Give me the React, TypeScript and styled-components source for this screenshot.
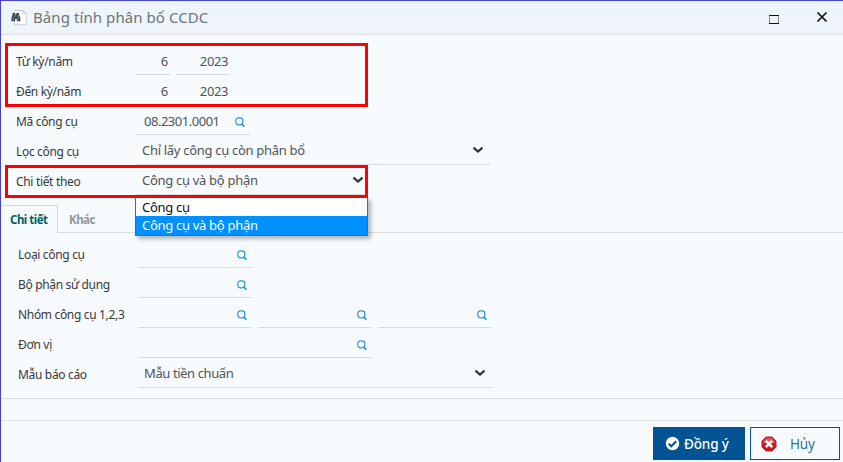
import React from "react";
import styled, { createGlobalStyle } from "styled-components";

const Global = createGlobalStyle`
  * { box-sizing: border-box; }
  body { margin: 0; background: #f7fbfe; font-family: "Noto Sans", "Open Sans", sans-serif; }
`;

const Dialog = styled.div`
  position: relative;
  width: 843px;
  height: 462px;
  overflow: hidden;
  display: flex;
  flex-direction: column;
  background: #f7fbfe;
  border-left: 1px solid #4343cf;
  border-top: 1px solid #4343cf;
  white-space: nowrap;
`;

const TitleBar = styled.header`
  display: flex;
  align-items: center;
  height: 34px;
  padding: 0 15px 0 10px;
  background: #edf5fb;
  border-bottom: 1px solid #e0e0e0;
`;

const Title = styled.h1`
  flex: 1;
  margin: -1px 0 0 6px;
  font-size: 15px;
  line-height: 20px;
  font-weight: 400;
  letter-spacing: 0.08px;
  color: #6f7376;
`;

const WindowButton = styled.button<{ $gap?: number }>`
  display: flex;
  padding: 0;
  margin: ${(p) => (p.$gap ? -2 : 0)}px 0 0 ${(p) => p.$gap ?? 0}px;
  border: 0;
  background: none;
`;

const Form = styled.section<{ $left: number; $top: number }>`
  display: flex;
  flex-direction: column;
  padding: ${(p) => p.$top}px 0 0 ${(p) => p.$left}px;
`;

const Row = styled.div<{ $labelWidth: number }>`
  display: grid;
  grid-template-columns: ${(p) => p.$labelWidth}px auto;
  height: 30px;
`;

const Label = styled.label`
  font-size: 12px;
  line-height: 33px;
  letter-spacing: -0.33px;
  color: #36383a;
`;

const Fields = styled.div`
  display: flex;
  gap: 6px;
`;

const Field = styled.div<{ $width: number; $pad?: number; $padEnd?: number; $end?: boolean }>`
  display: flex;
  align-items: center;
  justify-content: ${(p) => (p.$end ? "flex-end" : "space-between")};
  width: ${(p) => p.$width}px;
  height: 30px;
  padding: 0 ${(p) => (p.$end ? 2 : p.$padEnd ?? 5)}px 0 ${(p) => p.$pad ?? 6}px;
  border-bottom: 1px solid #d9dcdf;
`;

const Value = styled.span<{ $tracking?: number; $drop?: number }>`
  flex: none;
  font-size: 13px;
  line-height: 28px;
  padding-top: ${(p) => p.$drop ?? 0}px;
  letter-spacing: ${(p) => p.$tracking ?? -0.3}px;
  color: #505356;
`;

const IconSlot = styled.span<{ $drop?: number }>`
  display: flex;
  margin-left: auto;
  margin-top: ${(p) => p.$drop ?? 0}px;
`;

const Tabs = styled.nav`
  display: flex;
  height: 38px;
  padding-top: 10px;
  border-bottom: 1px solid #d9dcdf;
`;

const Tab = styled.button<{ $active?: boolean }>`
  height: ${(p) => (p.$active ? 28 : 27)}px;
  width: ${(p) => (p.$active ? 57 : 49)}px;
  padding: ${(p) => (p.$active ? 0 : 2)}px 0 0 ${(p) => (p.$active ? 9 : 11)}px;
  text-align: left;
  border: solid #d9dcdf;
  border-width: ${(p) => (p.$active ? "1px 1px 0 0" : "0")};
  background: #f7fbfe;
  font: 700 11.5px/25px "Noto Sans", sans-serif;
  letter-spacing: -0.5px;
  color: ${(p) => (p.$active ? "#00645f" : "#929699")};
`;

const Divider = styled.div`
  height: 1px;
  margin-top: 10px;
  background: #d9dcdf;
`;

const Footer = styled.footer`
  display: flex;
  justify-content: flex-end;
  gap: 5px;
  margin-top: 21px;
  padding: 6px 3px 0 0;
  height: 42px;
  border-top: 1px solid #dfe2e5;
`;

const Action = styled.button<{ $primary?: boolean }>`
  display: flex;
  align-items: center;
  width: ${(p) => (p.$primary ? 92 : 90)}px;
  height: 33px;
  padding: 0 0 0 ${(p) => (p.$primary ? 11 : 10)}px;
  gap: ${(p) => (p.$primary ? 4 : 13)}px;
  border: 1px solid #005493;
  background: ${(p) => (p.$primary ? "#005493" : "#f7fbfe")};
  color: ${(p) => (p.$primary ? "#ffffff" : "#2c70a4")};
  font: ${(p) => (p.$primary ? 500 : 400)} 13.5px/30px "Noto Sans", sans-serif;
  letter-spacing: -0.15px;
`;

const Highlight = styled.div<{ $top: number; $height: number }>`
  position: absolute;
  left: 4px;
  top: ${(p) => p.$top}px;
  width: 363px;
  height: ${(p) => p.$height}px;
  border: 3px solid #ff0000;
`;

const Menu = styled.ul`
  position: absolute;
  left: 134px;
  top: 196px;
  width: 233px;
  margin: 0;
  padding: 0;
  list-style: none;
  background: #ffffff;
  border: 1px solid #646464;
  box-shadow: 3px 3px 4px rgba(0, 0, 0, 0.28);
`;

const Option = styled.li<{ $selected?: boolean }>`
  height: ${(p) => (p.$selected ? 19 : 18)}px;
  padding-left: 6px;
  font-size: 13px;
  line-height: 19px;
  letter-spacing: -0.3px;
  color: ${(p) => (p.$selected ? "#ffffff" : "#111111")};
  background: ${(p) => (p.$selected ? "#0090ff" : "#ffffff")};
`;

const Search = () => (
  <IconSlot $drop={4}>
    <svg width="10" height="10" viewBox="0 0 10 10" fill="none" stroke="#2b95d8">
      <rect x="0.8" y="0.8" width="7" height="7" rx="2.7" strokeWidth="1.2" />
      <path d="M6.9 7.2 9.4 9.6" strokeWidth="1.7" />
    </svg>
  </IconSlot>
);

const Chevron = () => (
  <IconSlot>
    <svg width="12" height="8" viewBox="0 0 12 8" fill="none">
      <path d="M1.5 1.7 6 5.6l4.5-3.9" stroke="#303234" strokeWidth="2.2" />
    </svg>
  </IconSlot>
);

const DocumentSearch = () => (
  <svg width="16" height="17" viewBox="0 0 16 17">
    <path d="M3.5 1.5h8.7l3.1 3v11.2H3.5z" fill="#fff" stroke="#c6ccd0" />
    <path d="M12 1.5v3.2h3.3" fill="#eef0f1" stroke="#c6ccd0" />
    <path d="M1.6 4h2.6v1.4h1.2V4H8v1.7l1.4 3.1v3.4H5.8V10H4.2v2.2H.4V8.8l1.2-3z" fill="#37474f" />
    <path d="M2.3 8v3M4 5v3M7 6v5" stroke="#8294a0" />
  </svg>
);

const SearchField = ({ width = 114, value }: { width?: number; value?: string }) => (
  <Field $width={width} $pad={8}>
    {value && <Value $tracking={-0.48} $drop={2}>{value}</Value>}
    <Search />
  </Field>
);

const PeriodRow = ({ label }: { label: string }) => (
  <Row $labelWidth={120}>
    <Label>{label}</Label>
    <Fields>
      <Field $width={34} $end><Value $drop={2}>6</Value></Field>
      <Field $width={54} $end><Value $tracking={-0.4} $drop={2}>2023</Value></Field>
    </Fields>
  </Row>
);

export default function App() {
  return (
    <>
      <Global />
      <Dialog>
        <TitleBar>
          <DocumentSearch />
          <Title>Bảng tính phân bổ CCDC</Title>
          <WindowButton aria-label="Maximize">
            <svg width="10" height="14" viewBox="0 0 10 14">
              <path d="M.5 4v9M9.5 4v9" stroke="#879087" />
              <path d="M0 4.5h10M0 12.5h10" stroke="#111" />
            </svg>
          </WindowButton>
          <WindowButton aria-label="Close" $gap={37}>
            <svg width="12" height="12" viewBox="0 0 12 12">
              <path d="m1.5 1.5 9 9m0-9-9 9" stroke="#111" strokeWidth="1.7" />
            </svg>
          </WindowButton>
        </TitleBar>

        <Form $left={15} $top={10}>
          <PeriodRow label="Từ kỳ/năm" />
          <PeriodRow label="Đến kỳ/năm" />
          <Row $labelWidth={120}>
            <Label>Mã công cụ</Label>
            <SearchField value="08.2301.0001" />
          </Row>
          <Row $labelWidth={120}>
            <Label>Lọc công cụ</Label>
            <Field $width={354} $padEnd={6}>
              <Value>Chỉ lấy công cụ còn phân bổ</Value>
              <Chevron />
            </Field>
          </Row>
          <Row $labelWidth={120}>
            <Label>Chi tiết theo</Label>
            <Field $width={232} $padEnd={4}>
              <Value>Công cụ và bộ phận</Value>
              <Chevron />
            </Field>
          </Row>
        </Form>

        <Tabs>
          <Tab $active>Chi tiết</Tab>
          <Tab>Khác</Tab>
        </Tabs>

        <Form $left={17} $top={5}>
          <Row $labelWidth={120}>
            <Label>Loại công cụ</Label>
            <SearchField />
          </Row>
          <Row $labelWidth={120}>
            <Label>Bộ phận sử dụng</Label>
            <SearchField />
          </Row>
          <Row $labelWidth={120}>
            <Label>Nhóm công cụ 1,2,3</Label>
            <Fields>
              <SearchField />
              <SearchField />
              <SearchField />
            </Fields>
          </Row>
          <Row $labelWidth={120}>
            <Label>Đơn vị</Label>
            <SearchField width={234} />
          </Row>
          <Row $labelWidth={120}>
            <Label>Mẫu báo cáo</Label>
            <Field $width={354} $padEnd={6}>
              <Value $tracking={-0.4}>Mẫu tiền chuẩn</Value>
              <Chevron />
            </Field>
          </Row>
        </Form>

        <Divider />
        <Footer>
          <Action $primary>
            <svg width="15" height="15" viewBox="0 0 15 15">
              <circle cx="7.5" cy="7.5" r="6.7" fill="#fff" />
              <path d="m3.7 7.6 2.6 2.7 4.9-5" fill="none" stroke="#005493" strokeWidth="2" />
            </svg>
            Đồng ý
          </Action>
          <Action>
            <svg width="16" height="16" viewBox="0 0 16 16">
              <path d="M5 1h6l4 4v6l-4 4H5l-4-4V5z" fill="#cf1723" stroke="#b9202a" />
              <path d="M5.3 2h5.4l3 3v2H2.3V5z" fill="#e8555b" />
              <path d="m4.8 4.8 6.4 6.4m0-6.4-6.4 6.4" stroke="#fff" strokeWidth="2.6" />
            </svg>
            Hủy
          </Action>
        </Footer>

        <Menu>
          <Option>Công cụ</Option>
          <Option $selected>Công cụ và bộ phận</Option>
        </Menu>
        <Highlight $top={42} $height={64} />
        <Highlight $top={164} $height={33} />
      </Dialog>
    </>
  );
}
